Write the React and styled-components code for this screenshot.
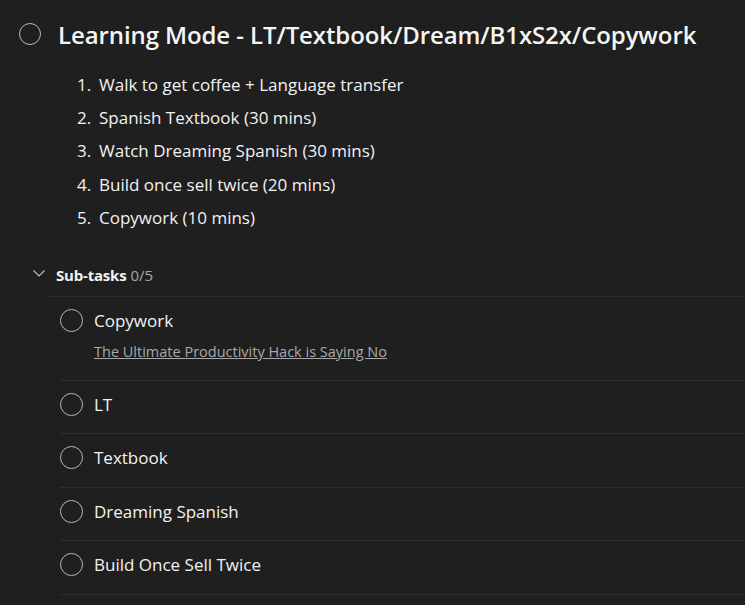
import React from "react";
import styled, { createGlobalStyle } from "styled-components";

const Global = createGlobalStyle`
  html, body { margin: 0; padding: 0; background: #1f1f1f; }
  body { font-family: "Open Sans", "Noto Sans", sans-serif; color: #f2f2f2; }
`;

const Page = styled.div`
  width: 745px;
  height: 605px;
  overflow: hidden;
  background: #1f1f1f;
  box-sizing: border-box;
  padding: 16px 0 0 19px;
`;

const TitleRow = styled.div`
  display: flex;
  align-items: center;
  gap: 17px;
  height: 36px;
`;

const Circle = styled.span`
  flex: none;
  box-sizing: border-box;
  width: ${(p) => p.$size}px;
  height: ${(p) => p.$size}px;
  border-radius: 50%;
  border: 1.5px solid #b9b9b9;
`;

const Title = styled.h1`
  margin: 0;
  font-size: 24px;
  font-weight: 600;
  letter-spacing: -0.1px;
  color: #f5f5f5;
  white-space: nowrap;
`;

const Steps = styled.ol`
  margin: 16px 0 0 0;
  padding: 0 0 0 80px;
  list-style: none;
  counter-reset: step;
`;

const Step = styled.li`
  counter-increment: step;
  height: 33.2px;
  line-height: 33.2px;
  font-size: 17px;
  color: #f2f2f2;
  position: relative;
  &::before {
    content: counter(step) ".";
    position: absolute;
    left: -22px;
  }
`;

const Section = styled.section`
  margin-top: 23px;
`;

const SectionHeader = styled.div`
  display: flex;
  align-items: center;
  padding-left: 13px;
  height: 39px;
  box-sizing: border-box;
  padding-bottom: 2px;
`;

const Chevron = styled.svg`
  width: 14px;
  height: 14px;
  margin-right: 10px;
  margin-bottom: 4px;
`;

const SectionTitle = styled.span`
  font-size: 15px;
  font-weight: 700;
  letter-spacing: -0.2px;
  color: #f2f2f2;
`;

const Count = styled.span`
  font-size: 15px;
  color: #a8a8a8;
  margin-left: 4px;
`;

const SubList = styled.div`
  margin-left: 31px;
  border-top: 1px solid #2e2e2e;
`;

const SubRow = styled.div`
  margin-left: 10px;
  display: flex;
  align-items: flex-start;
  gap: 11px;
  padding-top: 12px;
  height: ${(p) => p.$h}px;
  box-sizing: border-box;
  border-bottom: 1px solid #2e2e2e;
`;

const SubBody = styled.div`
  display: flex;
  flex-direction: column;
`;

const SubTitle = styled.span`
  font-size: 17px;
  line-height: 24px;
  color: #f2f2f2;
`;

const SubLink = styled.a`
  margin-top: 9px;
  font-size: 14.5px;
  color: #a9a9a9;
  text-decoration: underline;
`;

const steps = [
  "Walk to get coffee + Language transfer",
  "Spanish Textbook (30 mins)",
  "Watch Dreaming Spanish (30 mins)",
  "Build once sell twice (20 mins)",
  "Copywork (10 mins)",
];

const subs = [
  { t: "Copywork", link: "The Ultimate Productivity Hack is Saying No", h: 84 },
  { t: "LT", h: 53 },
  { t: "Textbook", h: 54 },
  { t: "Dreaming Spanish", h: 53 },
  { t: "Build Once Sell Twice", h: 54 },
];

export default function App() {
  return (
    <>
      <Global />
      <Page>
        <TitleRow>
          <Circle $size={22} />
          <Title>Learning Mode - LT/Textbook/Dream/B1xS2x/Copywork</Title>
        </TitleRow>
        <Steps>
          {steps.map((s) => (
            <Step key={s}>{s}</Step>
          ))}
        </Steps>
        <Section>
          <SectionHeader>
            <Chevron viewBox="0 0 14 14" fill="none">
              <path d="M1.5 4.5 L7 10 L12.5 4.5" stroke="#bdbdbd" strokeWidth="1.2" />
            </Chevron>
            <SectionTitle>Sub-tasks</SectionTitle>
            <Count>0/5</Count>
          </SectionHeader>
          <SubList>
            {subs.map((s) => (
              <SubRow key={s.t} $h={s.h}>
                <Circle $size={23} />
                <SubBody>
                  <SubTitle>{s.t}</SubTitle>
                  {s.link && <SubLink href="#">{s.link}</SubLink>}
                </SubBody>
              </SubRow>
            ))}
          </SubList>
        </Section>
      </Page>
    </>
  );
}
